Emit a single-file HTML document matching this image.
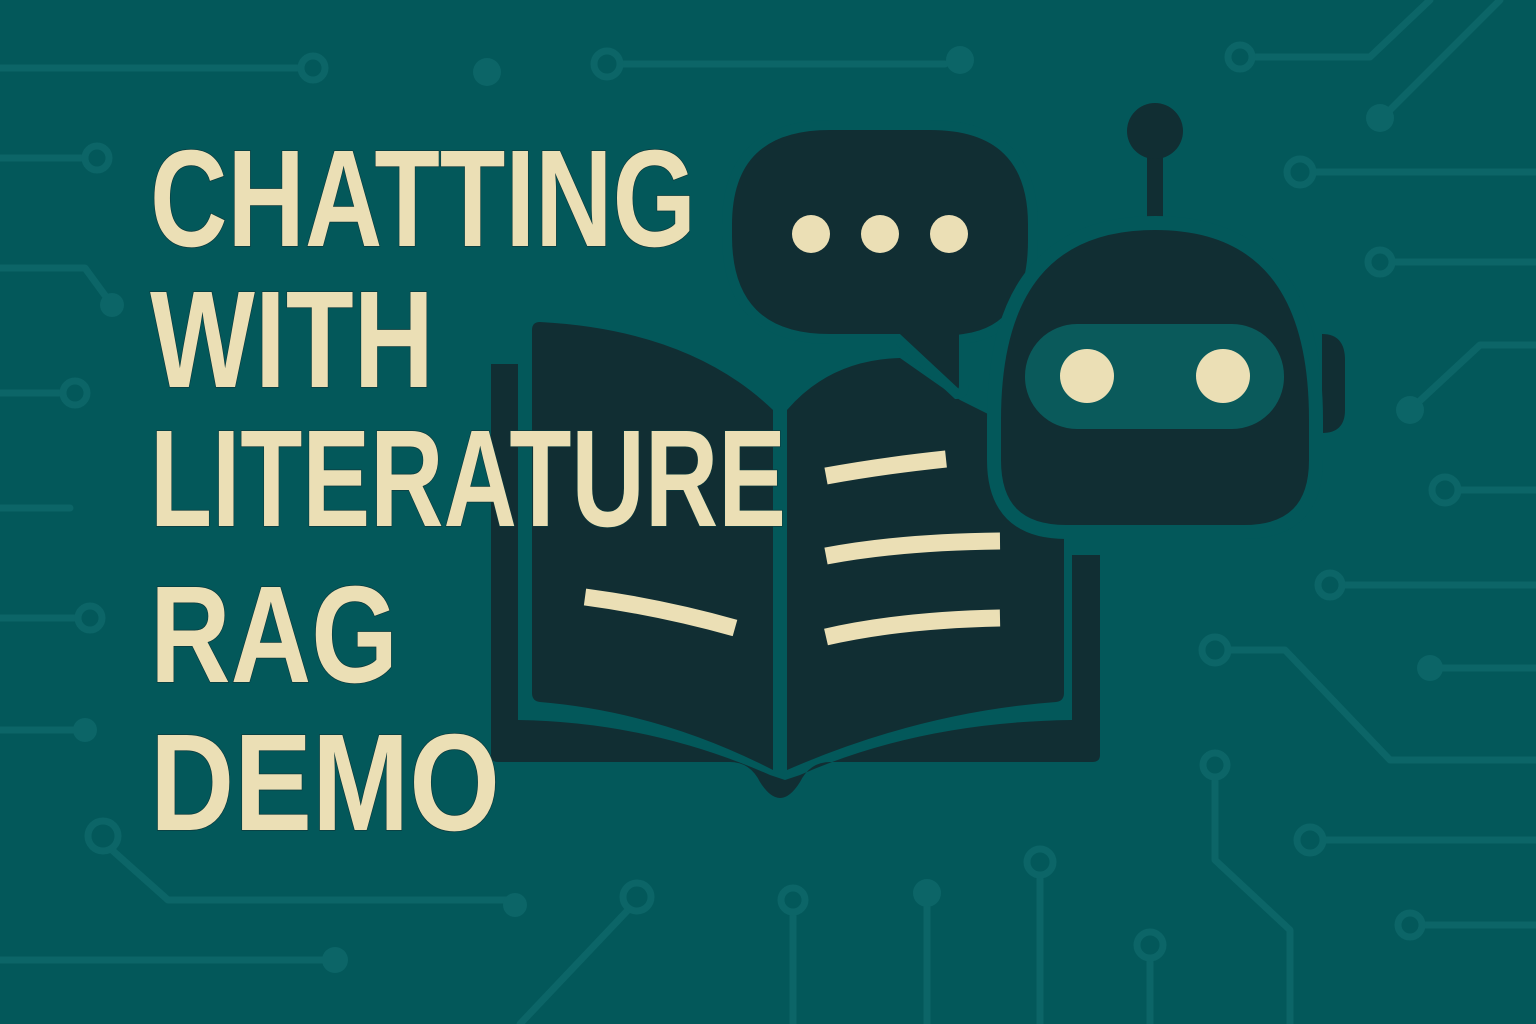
<!DOCTYPE html>
<html><head><meta charset="utf-8"><style>
html,body{margin:0;padding:0;background:#03585a;}
svg{display:block}
</style></head><body>
<svg width="1536" height="1024" viewBox="0 0 1536 1024" xmlns="http://www.w3.org/2000/svg">
<rect width="1536" height="1024" fill="#03585a"/>
<g stroke="#0c6567" stroke-width="7" fill="none" stroke-linecap="round" stroke-linejoin="round">
<path d="M0 68H300"/><circle cx="313" cy="68" r="12"/>
<path d="M620 64H945"/><circle cx="607" cy="64" r="13"/>
<path d="M1253 57H1370L1430 0"/><circle cx="1240" cy="57" r="12"/>
<path d="M1390 110L1500 0"/>
<path d="M1313 172H1536"/><circle cx="1300" cy="172" r="13"/>
<path d="M1392 262H1536"/><circle cx="1380" cy="262" r="12"/>
<path d="M0 158H85"/><circle cx="97" cy="158" r="12"/>
<path d="M0 268H85L112 305"/>
<path d="M0 393H63"/><circle cx="75" cy="393" r="12"/>
<path d="M0 508H70"/>
<path d="M0 618H78"/><circle cx="90" cy="618" r="12"/>
<path d="M0 730H80"/>
<path d="M112 850L168 900H515"/><circle cx="103" cy="836" r="15"/>
<path d="M0 960H335"/>
<path d="M628 910L520 1024"/><circle cx="637" cy="897" r="14"/>
<path d="M793 913V1024"/><circle cx="793" cy="900" r="12"/>
<path d="M927 893V1024"/>
<path d="M1040 875V1024"/><circle cx="1040" cy="862" r="13"/>
<path d="M1150 958V1024"/><circle cx="1150" cy="945" r="13"/>
<path d="M1215 778V860L1290 930V1024"/><circle cx="1215" cy="765" r="12"/>
<path d="M1228 650H1285L1390 760H1536"/><circle cx="1215" cy="650" r="13"/>
<path d="M1323 840H1536"/><circle cx="1310" cy="840" r="13"/>
<path d="M1423 925H1536"/><circle cx="1410" cy="925" r="12"/>
<path d="M1343 585H1536"/><circle cx="1330" cy="585" r="12"/>
<path d="M1430 668H1536"/>
<path d="M1458 490H1536"/><circle cx="1445" cy="490" r="13"/>
<path d="M1410 410L1480 345H1536"/>
</g>
<g fill="#0c6567">
<circle cx="487" cy="72" r="14"/><circle cx="960" cy="60" r="14"/><circle cx="1380" cy="118" r="14"/>
<circle cx="112" cy="305" r="12"/><circle cx="85" cy="730" r="12"/><circle cx="515" cy="905" r="12"/>
<circle cx="335" cy="960" r="13"/><circle cx="927" cy="893" r="14"/><circle cx="1430" cy="668" r="13"/>
<circle cx="1410" cy="410" r="14"/>
</g>
<!-- book -->
<g fill="#112e33">
<path d="M491 364H518V720Q650 722 770 775L785 780L800 775Q920 722 1072 720V555H1100V755Q1100 762 1092 762H830Q810 762 800 782Q790 798 780 798Q770 798 760 782Q750 762 730 762H498Q491 762 491 755Z"/>
<path d="M532 330Q532 322 540 322Q690 330 773 410V770Q660 712 540 702Q532 701 532 693Z"/>
<path d="M787 410Q830 360 900 358L960 400L1000 420L1064 430V693Q1064 701 1056 702Q920 712 787 770Z"/>
</g>
<!-- speech bubble -->
<path d="M830 125H930Q1033 125 1033 225V240Q1033 330 964 339V385Q964 394 957 394L898 339H830Q727 339 727 236V225Q727 125 830 125Z" fill="#112e33" stroke="#03585a" stroke-width="10"/>
<g fill="#ebdfb5"><circle cx="811" cy="234" r="19"/><circle cx="880" cy="234" r="19"/><circle cx="949" cy="234" r="19"/></g>
<!-- robot -->
<rect x="1147" y="131" width="16" height="100" fill="#112e33"/>
<circle cx="1155" cy="131" r="28" fill="#112e33"/>
<path d="M1322 334Q1345 334 1345 360V410Q1345 433 1322 433Z" fill="#112e33"/>
<path d="M1155 223Q1316 223 1316 420V460Q1316 532 1244 532H1066Q994 532 994 460V420Q994 223 1155 223Z" fill="#112e33" stroke="#03585a" stroke-width="14"/>
<rect x="1025" y="324" width="259" height="105" rx="52" fill="#0a5a5b"/>
<g fill="#ebdfb5"><ellipse cx="1087" cy="376" rx="27" ry="27"/><ellipse cx="1223" cy="376" rx="27" ry="27"/></g>
<!-- page lines -->
<g stroke="#ebdfb5" stroke-width="17" fill="none">
<path d="M826 476Q880 466 946 459"/>
<path d="M826 556Q900 542 1000 541"/>
<path d="M826 637Q900 620 1000 618"/>
<path d="M585 597Q660 607 735 628"/>
</g>
<!-- title -->
<g font-family="'Liberation Sans Narrow','Liberation Sans',sans-serif" font-weight="bold" font-size="138" fill="#ebdfb5" stroke="#0c3a3c" stroke-width="1.5" paint-order="stroke">
<text x="150" y="246" textLength="546" lengthAdjust="spacingAndGlyphs">CHATTING</text>
<text x="150" y="387" textLength="284" lengthAdjust="spacingAndGlyphs">WITH</text>
<text x="150" y="526" textLength="636" lengthAdjust="spacingAndGlyphs">LITERATURE</text>
<text x="150" y="682" textLength="248" lengthAdjust="spacingAndGlyphs">RAG</text>
<text x="150" y="830" textLength="350" lengthAdjust="spacingAndGlyphs">DEMO</text>
</g>
</svg>
</body></html>
